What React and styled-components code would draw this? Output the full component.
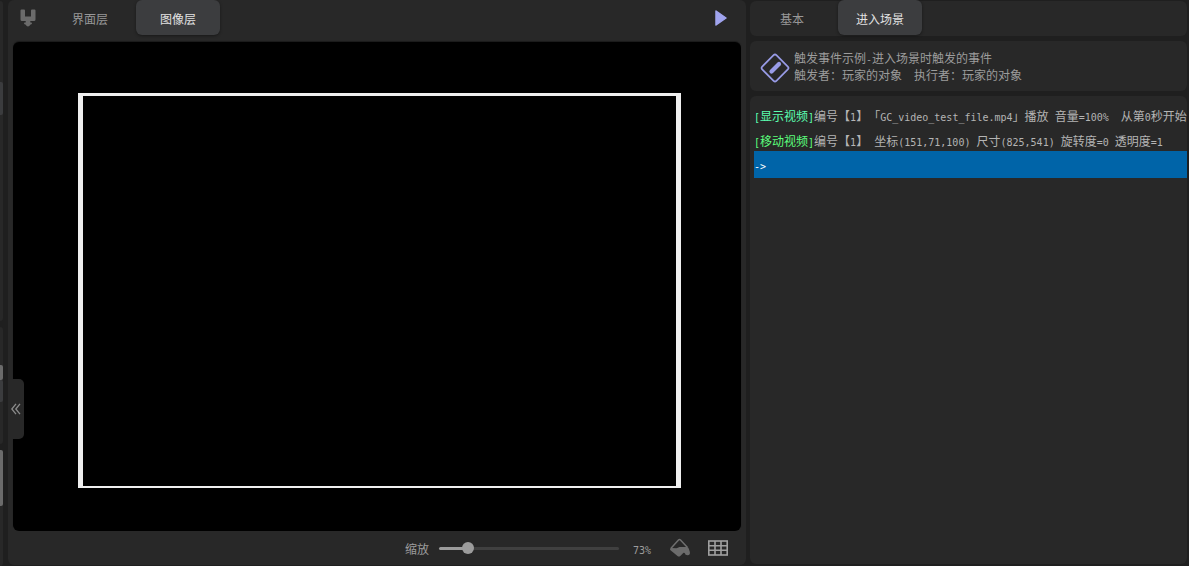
import { useState } from 'react'
import styled, { createGlobalStyle, css } from 'styled-components'

const GlobalStyle = createGlobalStyle`
  * {
    box-sizing: border-box;
  }

  body {
    margin: 0;
    background: #1f1f1f;
    color: #9c9c9c;
    font-family: 'Noto Sans CJK SC', sans-serif;
    font-size: 12px;
    line-height: 17px;
    text-spacing-trim: space-all;
  }

  button,
  input {
    margin: 0;
    font: inherit;
    color: inherit;
  }

  svg {
    display: block;
    flex: none;
  }
`

const Page = styled.div`
  display: grid;
  grid-template-columns: 3px minmax(0, 743fr) minmax(0, 443fr);
  min-height: 100vh;
  overflow: hidden;
`

// Edge of the collapsed sidebar
const Sidebar = styled.aside`
  display: flex;
  flex-direction: column;
  gap: 6px;
  padding-top: 1px;
`

const SidebarBlock = styled.div`
  flex: ${({ $height }) => ($height ? `0 0 ${$height}px` : '1 0 0')};
  padding-top: ${({ $offset }) => $offset || 0}px;
  background: #282828;
  border-radius: 0 4px 4px 0;
`

const SidebarBar = styled.div`
  height: ${({ $height }) => $height}px;
  background: ${({ $light }) => ($light ? '#6b6b6b' : '#3b3c3e')};
  border-radius: 0 2px 2px 0;
`

// Scene editor
const Editor = styled.main`
  position: relative;
  display: flex;
  flex-direction: column;
  margin: 0 0 1px 5px;
  padding: 0 5px;
  background: #282828;
  border-radius: 6px;
`

const EditorHeader = styled.header`
  display: flex;
  align-items: flex-start;
  gap: 5px;
  height: 42px;
  padding-right: 12px;
`

const IconButton = styled.button`
  display: flex;
  align-items: center;
  justify-content: center;
  width: ${({ $width }) => $width || 24}px;
  height: ${({ $height }) => $height || 24}px;
  padding: 0;
  border: none;
  background: none;
  cursor: pointer;
`

const Tabs = styled.nav`
  display: flex;
  gap: 4px;
  flex: 1;
`

const Tab = styled.button`
  width: 84px;
  height: 35px;
  padding: 2px 0 0;
  border: none;
  border-radius: 6px;
  background: none;
  color: #989898;
  cursor: pointer;

  ${({ $active }) =>
    $active &&
    css`
      background: #3c3d3f;
      color: #e2e2e2;
      box-shadow: 0 1px 3px rgba(0, 0, 0, 0.4);
    `}
`

const Canvas = styled.section`
  display: flex;
  flex: 1;
  min-height: 200px;
  padding: 51px 60px 43px 65px;
  background: #000;
  border-radius: 6px;
  box-shadow: 0 -1px 1px #1a1a1a;
`

const VideoFrame = styled.div`
  flex: 1;
  border: solid #efefef;
  border-width: 3px 5px 2px;
`

const CollapseButton = styled.button`
  position: absolute;
  left: 0;
  top: 379px;
  display: flex;
  align-items: center;
  justify-content: center;
  width: 16px;
  height: 60px;
  padding: 0;
  border: none;
  border-radius: 0 5px 5px 0;
  background: #282828;
  color: #8c8c8c;
  cursor: pointer;
`

const EditorFooter = styled.footer`
  display: flex;
  align-items: center;
  justify-content: flex-end;
  height: 34px;
  padding-right: 11px;
`

const FooterTools = styled.div`
  display: flex;
  gap: 14px;
`

const ZoomSlider = styled.input`
  appearance: none;
  width: 180px;
  height: 12px;
  margin: 0 14px 0 10px;
  background: none;

  &::-webkit-slider-runnable-track {
    height: 3px;
    border-radius: 2px;
    background: linear-gradient(
      to right,
      #9c9c9c var(--fill),
      #404040 var(--fill)
    );
  }

  &::-webkit-slider-thumb {
    appearance: none;
    width: 12px;
    height: 12px;
    margin-top: -5px;
    border-radius: 50%;
    background: #9c9c9c;
  }
`

const Mono = styled.span`
  font-family: 'DejaVu Sans Mono', monospace;
  font-size: 10px;
  line-height: 1;
  white-space: pre;
`

const ZoomValue = styled.output`
  width: 35px;
`

// Event panel
const EventColumn = styled.section`
  display: flex;
  flex-direction: column;
  gap: 5px;
  margin: 1px 2px 2px 4px;
`

const Panel = styled.div`
  background: #282828;
  border-radius: 6px;
`

const TabPanel = styled(Panel)`
  height: 35px;

  ${Tab} {
    margin-top: -1px;
  }
`

const EventInfo = styled(Panel)`
  display: flex;
  align-items: flex-start;
  gap: 4px;
  height: 50px;
  padding: 12px 10px 0;
  white-space: nowrap;
  overflow: hidden;
`

const InfoLines = styled.div`
  margin-top: -4px;
`

const InfoText = styled.p`
  margin: 0;
  white-space: pre;
`

const CommandPanel = styled(Panel)`
  flex: 1;
  min-height: 0;
  padding: 8px 0 0 4px;
`

const CommandList = styled.ol`
  margin: 0;
  padding: 0;
  list-style: none;
  overflow: hidden;
`

const Command = styled.li`
  height: 25px;
  line-height: 23px;
  white-space: pre;
  color: #b4b4b4;

  ${({ $selected }) =>
    $selected &&
    css`
      height: 27px;
      margin-top: -3px;
      line-height: 27px;
      background: #0064a8;
      color: #fff;
    `}
`

const CommandName = styled.span`
  color: ${({ $color }) => $color};
`

const commands = [
  {
    name: '[显示视频]',
    color: '#5cffb0',
    text: '编号【1】「GC_video_test_file.mp4」播放 音量=100%  从第0秒开始',
  },
  {
    name: '[移动视频]',
    color: '#5cff7c',
    text: '编号【1】 坐标(151,71,100) 尺寸(825,541) 旋转度=0 透明度=1',
  },
]

// Latin runs take half the width of a Chinese character
const MixedText = ({ children }) =>
  children
    .split(/([\x20-\x7e]+)/)
    .map((part, i) => (i % 2 ? <Mono key={i}>{part}</Mono> : part))

const ToolIcon = () => (
  <svg width="16" height="18" viewBox="0 0 16 18" fill="#6b6b6b">
    <path d="M1.500.500h2.500q1 0 1 1V7.500h6V1.500q0-1 1-1h2.500q1 0 1 1v9q0 1.500-1.500 1.500H10.300v1.500h.7q1.300 0 1 1-.3 1-1.800 1.200Q9.500 17.500 8 17.500T5.800 15.700Q4.300 15.500 4 14.500q-.3-1 1-1h.7V12H2Q.5 12 .5 10.500v-9q0-1 1-1z" />
  </svg>
)

const PlayIcon = () => (
  <svg width="12" height="16" viewBox="0 0 12 16">
    <path
      d="M1 1l10 7-10 7z"
      fill="#a0a4ee"
      stroke="#a0a4ee"
      strokeWidth="1.500"
      strokeLinejoin="round"
    />
  </svg>
)

const EventIcon = () => (
  <svg width="30" height="30" viewBox="0 0 30 30" fill="none" stroke="#989be6">
    <path
      d="M13.600 2.200L2.200 13.600q-1.400 1.400 0 2.800l11.400 11.400q1.400 1.400 2.800 0l11.400-11.400q1.400-1.400 0-2.800L16.400 2.200q-1.400-1.400-2.800 0z"
      strokeWidth="1.700"
    />
    <path d="M11.500 18.500l7.500-7.500" strokeWidth="4.200" strokeLinecap="round" />
  </svg>
)

const BucketIcon = () => (
  <svg width="22" height="20" viewBox="0 0 22 20" fill="none">
    <path
      d="M2 10.200l7.500-8.200q1-1 2 0l7 7.500"
      stroke="#6f6f6f"
      strokeWidth="1.500"
      strokeLinejoin="round"
    />
    <path
      d="M1 10.800q.3-1 1.500-.9l5 .3 3-1.200h7.500q1.300 0 1.800 1.700l1 3q.8 3.300-2.200 3.500-2.500 0-2.900-2.300l-1.200-.2-3.200 3.300q-1.500 1-2.800 0L1.500 12.300q-.7-.8-.5-1.500z"
      fill="#6c6c6c"
    />
  </svg>
)

const GridIcon = () => (
  <svg
    width="20"
    height="16"
    viewBox="0 0 20 16"
    fill="none"
    stroke="#a0a0a0"
    strokeWidth="1.600"
  >
    <rect x=".8" y="1" width="18.400" height="14" />
    <path d="M.8 5.700h18.400M.8 10.300h18.400M7 1v14M13 1v14" />
  </svg>
)

const CollapseIcon = () => (
  <svg
    width="10"
    height="12"
    viewBox="0 0 10 12"
    fill="none"
    stroke="currentColor"
    strokeWidth="1.300"
  >
    <path d="M5 .8L.8 6 5 11.200M9 .8L4.800 6 9 11.200" />
  </svg>
)

const MIN_ZOOM = 50
const MAX_ZOOM = 220

const App = () => {
  const [zoom, setZoom] = useState(73)
  const fill = ((zoom - MIN_ZOOM) / (MAX_ZOOM - MIN_ZOOM)) * 100

  return (
    <>
      <GlobalStyle />
      <Page>
        <Sidebar>
          <SidebarBlock $height={320} $offset={81}>
            <SidebarBar $height={33} />
          </SidebarBlock>
          <SidebarBlock $height={117} $offset={38}>
            <SidebarBar $height={15} $light />
            <SidebarBar $height={22} />
          </SidebarBlock>
          <SidebarBlock>
            <SidebarBar $height={56} $light />
          </SidebarBlock>
        </Sidebar>

        <Editor>
          <EditorHeader>
            <IconButton $width={30} $height={36} aria-label="工具">
              <ToolIcon />
            </IconButton>
            <Tabs>
              <Tab>界面层</Tab>
              <Tab $active>图像层</Tab>
            </Tabs>
            <IconButton $width={16} $height={36} aria-label="播放">
              <PlayIcon />
            </IconButton>
          </EditorHeader>
          <Canvas>
            <VideoFrame />
          </Canvas>
          <EditorFooter>
            <label htmlFor="zoom">缩放</label>
            <ZoomSlider
              id="zoom"
              type="range"
              min={MIN_ZOOM}
              max={MAX_ZOOM}
              value={zoom}
              onChange={(e) => setZoom(Number(e.target.value))}
              style={{ '--fill': `${fill}%` }}
            />
            <ZoomValue htmlFor="zoom">
              <Mono>{zoom}%</Mono>
            </ZoomValue>
            <FooterTools>
              <IconButton aria-label="填充">
                <BucketIcon />
              </IconButton>
              <IconButton aria-label="网格">
                <GridIcon />
              </IconButton>
            </FooterTools>
          </EditorFooter>
          <CollapseButton aria-label="收起">
            <CollapseIcon />
          </CollapseButton>
        </Editor>

        <EventColumn>
          <TabPanel>
            <Tabs>
              <Tab>基本</Tab>
              <Tab $active>进入场景</Tab>
            </Tabs>
          </TabPanel>
          <EventInfo>
            <EventIcon />
            <InfoLines>
              <InfoText>
                <MixedText>触发事件示例-进入场景时触发的事件</MixedText>
              </InfoText>
              <InfoText>
                <MixedText>触发者：玩家的对象  执行者：玩家的对象</MixedText>
              </InfoText>
            </InfoLines>
          </EventInfo>
          <CommandPanel>
            <CommandList>
              {commands.map(({ name, color, text }) => (
                <Command key={name}>
                  <CommandName $color={color}>
                    <MixedText>{name}</MixedText>
                  </CommandName>
                  <MixedText>{text}</MixedText>
                </Command>
              ))}
              <Command $selected>
                <MixedText>{'->'}</MixedText>
              </Command>
            </CommandList>
          </CommandPanel>
        </EventColumn>
      </Page>
    </>
  )
}

export default App
